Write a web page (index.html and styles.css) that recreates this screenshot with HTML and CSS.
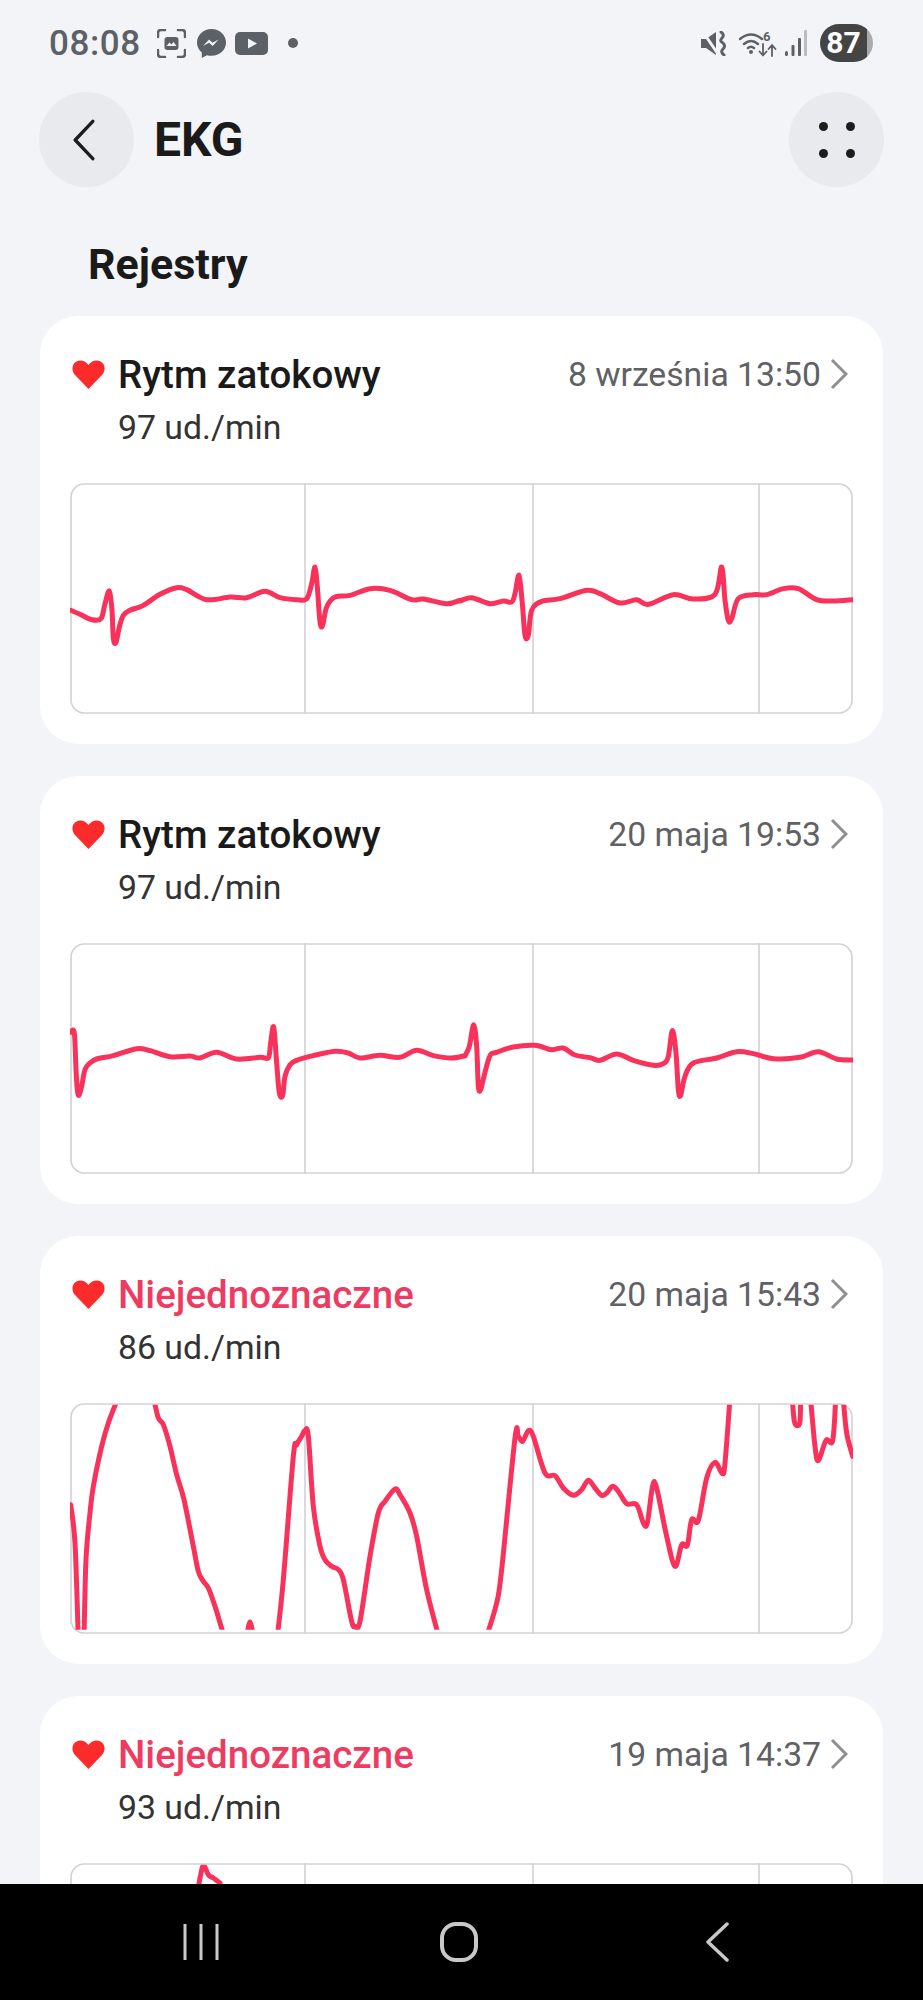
FILE: index.html
```html
<!DOCTYPE html>
<html lang="pl">
<head>
  <meta charset="UTF-8" />
  <meta name="viewport" content="width=device-width, initial-scale=1.0"/>
  <title>EKG</title>
  <link rel="stylesheet" href="styles.css">
</head>
<body>
  <!-- shared shapes -->
  <svg class="defs" width="0" height="0">
    <defs>
      <symbol id="heart" viewBox="0 0 33 29">
        <path d="M16.500 29L3 15C-1 10.500 0 4 4 1.800 8-.5 13 .5 16.500 5 20 .5 25-.5 29 1.800c4 2.200 5 8.700 1 13.200z"/>
      </symbol>
      <symbol id="chev" viewBox="0 0 18 32">
        <path d="M2 2l14 14L2 30"/>
      </symbol>
      <g id="grid">
        <path class="grid" d="M705 0V693M1389 0V693M2067 0V693"/>
        <rect class="grid" x="3" y="3" width="2343" height="687" rx="40"/>
      </g>
      <clipPath id="plot"><rect x="0" y="5" width="2349" height="675"/></clipPath>
    </defs>
  </svg>

  <div class="page">
    <div class="statusbar">
      <div class="status-left">
        <span class="clock">08:08</span>
        <svg class="ic-shot" viewBox="0 0 29 29">
          <path class="ic-line" d="M1 8V4q0-3 3-3h4M21 1h4q3 0 3 3v4M28 21v4q0 3-3 3h-4M8 28H4q-3 0-3-3v-4"/>
          <rect x="7.500" y="8" width="14" height="13" rx="3"/>
          <path class="ic-cut" d="M9.500 17l3-3.500 2 2 2-2.500 3 4z"/>
        </svg>
        <svg class="ic-msg" viewBox="0 0 29 29">
          <path d="M14.500 0C6.500 0 0 6 0 13.500c0 4 1.800 7.500 4.800 10V29l5.100-2.800c1.400.4 3 .6 4.600.6 8 0 14.500-6 14.500-13.300S22.500 0 14.500 0z"/>
          <path class="ic-bolt" d="M6 17l6-6.500 3.500 3.300 6-3.300-5.800 6.500-3.600-3.300z"/>
        </svg>
        <svg class="ic-yt" viewBox="0 0 33 23">
          <rect width="33" height="23" rx="5"/>
          <path class="ic-cut" d="M13 6.500l9 5-9 5z"/>
        </svg>
        <span class="status-dot"></span>
      </div>
      <div class="status-right">
        <svg class="ic-mute" viewBox="0 0 26 25">
          <path d="M0 8h5L15 1v23L5 17H0z"/>
          <path class="ic-cutline" d="M2 1l15 22"/>
          <path class="ic-wave" d="M20 1q4 3 1 6t1 5q3 3 0 6t1 6"/>
        </svg>
        <svg class="ic-wifi" viewBox="0 0 38 27">
          <path class="ic-line" d="M1 9q11-9 22 0M5 14q7-6 14 0M9 18q3-2.500 6 0"/>
          <circle cx="12" cy="22" r="2"/>
          <text class="wifi-six" x="24" y="11">6</text>
          <path class="ic-thin" d="M24 14v11M20.500 21.500l3.500 4 3.500-4M33 26V15M29.500 19l3.500-4 3.500 4"/>
        </svg>
        <svg class="ic-signal" viewBox="0 0 22 26">
          <rect x="0" y="21" width="3" height="5" rx="1.500"/>
          <rect x="6.500" y="15" width="3" height="11" rx="1"/>
          <rect x="13" y="8" width="3" height="18" rx="1"/>
          <rect class="signal-off" x="19" y="0" width="3" height="26" rx="1"/>
        </svg>
        <div class="battery">87</div>
      </div>
    </div>

    <div class="appbar">
      <div class="round-btn">
        <svg class="ic-back" viewBox="0 0 20 38"><path d="M18 2L2 19l16 17"/></svg>
      </div>
      <h1>EKG</h1>
      <div class="round-btn more">
        <div class="dots"><i></i><i></i><i></i><i></i></div>
      </div>
    </div>

    <div class="list">
      <h2>Rejestry</h2>

      <div class="card">
        <div class="card-head">
          <svg class="heart"><use href="#heart"/></svg>
          <span class="card-title">Rytm zatokowy</span>
          <span class="card-date">8 września 13:50</span>
          <svg class="chev"><use href="#chev"/></svg>
        </div>
        <div class="card-sub">97 ud./min</div>
        <svg class="chart" viewBox="0 0 2349 693">
          <use href="#grid"/>
          <polyline class="trace" transform="translate(-120,-518)" points="122,900 150,912 185,928 213,925 225,880 238,842 246,900 250,985 258,996 268,950 280,915 300,900 340,885 390,852 440,832 470,838 530,868 600,860 650,862 705,843 750,862 800,868 830,865 845,820 855,770 862,830 870,935 878,945 890,890 915,860 960,855 1020,835 1080,840 1145,868 1180,866 1250,880 1290,870"/>
          <polyline class="trace" transform="translate(1170,-518)" points="0,872 35,862 90,880 130,872 155,875 165,850 177,795 187,880 195,975 205,975 215,900 245,873 300,865 380,840 420,850 480,878 530,868 565,882 640,853 700,866 765,852 785,770 795,870 805,930 815,925 835,865 880,853 920,853 970,835 1015,835 1070,868 1120,872 1178,868"/>
        </svg>
      </div>

      <div class="card">
        <div class="card-head">
          <svg class="heart"><use href="#heart"/></svg>
          <span class="card-title">Rytm zatokowy</span>
          <span class="card-date">20 maja 19:53</span>
          <svg class="chev"><use href="#chev"/></svg>
        </div>
        <div class="card-sub">97 ud./min</div>
        <svg class="chart" viewBox="0 0 2349 693">
          <use href="#grid"/>
          <polyline class="trace" transform="translate(-120,-40)" points="122,308 133,310 138,420 142,480 147,497 155,470 165,420 180,400 200,388 250,378 320,357 360,363 420,381 480,379 510,385 560,368 620,388 690,383 715,384 722,340 731,292 740,400 748,490 758,497 765,440 780,405 800,392 850,378 915,365 955,370 990,385 1050,377 1110,383 1160,362 1210,378 1265,385 1305,378"/>
          <polyline class="trace" transform="translate(1170,-40)" points="15,378 28,350 41,285 50,350 55,470 62,480 72,440 90,378 110,368 160,352 225,347 275,360 310,355 345,376 390,384 420,392 470,373 520,392 580,407 610,402 625,380 637,303 648,370 655,480 662,497 675,440 700,400 770,385 830,366 880,372 940,387 1020,383 1075,366 1130,388 1178,391"/>
        </svg>
      </div>

      <div class="card">
        <div class="card-head">
          <svg class="heart"><use href="#heart"/></svg>
          <span class="card-title alert">Niejednoznaczne</span>
          <span class="card-date">20 maja 15:43</span>
          <svg class="chev"><use href="#chev"/></svg>
        </div>
        <div class="card-sub">86 ud./min</div>
        <svg class="chart" viewBox="0 0 2349 693">
          <use href="#grid"/>
          <g clip-path="url(#plot)">
            <g transform="translate(-120,-70)">
              <polyline class="trace" points="122,375 135,490 145,780"/>
              <polyline class="trace" points="162,780 168,540 180,400 190,320 215,200 235,130 262,60"/>
              <polyline class="trace" points="372,60 385,115 400,135 420,200 440,285 462,360 490,500 505,575 520,605 535,625 555,680 582,770"/>
              <polyline class="trace" points="650,770 660,727 670,770"/>
              <polyline class="trace" points="742,770 760,600 790,230 800,195 815,170 825,152 835,170 850,380 870,500 885,540 905,560 925,570 940,600 965,725 975,740 990,725 1020,530 1045,400 1065,365 1095,328 1110,345 1140,400 1160,470 1190,630 1226,770"/>
            </g>
            <g transform="translate(1170,-70)">
              <polyline class="trace" points="80,770 110,670 125,570 165,175 175,170 188,185 205,153 220,170 255,280 285,288 310,325 340,347 365,330 385,302 405,325 425,347 440,340 458,320 475,335 500,372 530,375 550,430 562,430 578,318 590,325 620,470 645,560 665,495 682,497 695,420 715,422 740,295 765,248 787,282 795,250 810,55"/>
              <polyline class="trace" points="997,60 1003,125 1012,138 1020,125 1022,60"/>
              <polyline class="trace" points="1052,60 1065,200 1075,243 1098,182 1118,183 1127,60"/>
              <polyline class="trace" points="1150,60 1160,160 1178,230"/>
            </g>
          </g>
        </svg>
      </div>

      <div class="card">
        <div class="card-head">
          <svg class="heart"><use href="#heart"/></svg>
          <span class="card-title alert">Niejednoznaczne</span>
          <span class="card-date">19 maja 14:37</span>
          <svg class="chev"><use href="#chev"/></svg>
        </div>
        <div class="card-sub">93 ud./min</div>
        <svg class="chart" viewBox="0 0 2349 693">
          <use href="#grid"/>
          <g clip-path="url(#plot)">
            <polyline class="trace" points="375,130 393,30 402,8 415,35 430,45 450,60"/>
          </g>
        </svg>
      </div>
    </div>

    <div class="navbar">
      <svg class="nav-recent" viewBox="0 0 36 36"><path d="M2 0V36M18 0V36M34 0V36"/></svg>
      <svg class="nav-home" viewBox="0 0 38 40"><rect x="2" y="2" width="34" height="36" rx="14"/></svg>
      <svg class="nav-back" viewBox="0 0 24 40"><path d="M22 2L3 20l19 18"/></svg>
    </div>
  </div>
  <script src="charts.js"></script>
</body>
</html>
```

FILE: styles.css
```css
body {
  margin: 0;
  background-color: #f2f4f7;
  font-family: Roboto, "Liberation Sans", sans-serif;
  color: #1a1a1a;
}
h1, h2 {
  margin: 0;
}
svg {
  display: block;
  flex: none;
}
.defs {
  position: absolute;
}
.page {
  height: 2000px;
  display: flex;
  flex-direction: column;
  overflow: hidden;
}

/* status bar */
.statusbar {
  height: 92px;
  flex: none;
  box-sizing: border-box;
  padding: 0 50px 6px 49px;
  display: flex;
  align-items: center;
  justify-content: space-between;
  color: #5c6167;
  fill: #5c6167;
}
.status-left,
.status-right {
  display: flex;
  align-items: center;
}
.clock {
  font-size: 35px;
  font-weight: 500;
  letter-spacing: 0.6px;
  width: 108px;
}
.ic-shot { width: 29px; height: 29px; margin-right: 11px; }
.ic-msg { width: 29px; height: 29px; margin-right: 9px; }
.ic-yt { width: 33px; height: 23px; margin-right: 20px; }
.status-dot {
  width: 10px;
  height: 10px;
  border-radius: 50%;
  background-color: #5c6167;
}
.ic-line, .ic-thin, .ic-cutline, .ic-wave {
  fill: none;
  stroke: #5c6167;
  stroke-width: 2.500;
  stroke-linecap: round;
}
.ic-thin { stroke-width: 1.800; }
.ic-wave { stroke-width: 3; }
.ic-cutline { stroke: #f2f4f7; stroke-width: 3; }
.ic-cut { fill: #f2f4f7; }
.ic-bolt { fill: #f2f4f7; }
.ic-mute { width: 26px; height: 25px; margin-right: 12px; }
.ic-wifi { width: 38px; height: 27px; margin-right: 8px; }
.wifi-six {
  font-size: 13px;
  font-weight: 700;
  font-family: Roboto, sans-serif;
}
.ic-signal { width: 22px; height: 26px; margin-right: 13px; }
.signal-off { fill: #b9bcc0; }
.battery {
  width: 53px;
  height: 38px;
  border-radius: 19px;
  background: linear-gradient(to right, #444 0, #444 47px, #aaa 47px);
  color: #fff;
  font-size: 30px;
  font-weight: 700;
  line-height: 38px;
  padding-right: 6px;
  box-sizing: border-box;
  text-align: center;
}

/* app bar */
.appbar {
  height: 95px;
  flex: none;
  padding: 0 39px;
  display: flex;
  align-items: center;
}
.round-btn {
  width: 95px;
  height: 95px;
  border-radius: 50%;
  background-color: #e8eaed;
  display: flex;
  align-items: center;
  justify-content: center;
}
.round-btn.more {
  margin-left: auto;
}
.ic-back {
  width: 22px;
  height: 42px;
  margin-right: 5px;
  fill: none;
  stroke: #1c1c1c;
  stroke-width: 3;
  stroke-linecap: round;
  stroke-linejoin: round;
}
h1 {
  font-size: 48px;
  font-weight: 700;
  margin-left: 20px;
}
.dots {
  display: grid;
  grid-template-columns: 9px 9px;
  gap: 18px;
}
.dots i {
  width: 9px;
  height: 9px;
  border-radius: 50%;
  background-color: #1c1c1c;
}

/* records list */
.list {
  flex: 1;
  min-height: 0;
  overflow: hidden;
  padding: 0 40px;
}
h2 {
  height: 129px;
  box-sizing: border-box;
  padding: 51px 0 0 48px;
  font-size: 43px;
  font-weight: 700;
  line-height: 52px;
}
.card {
  height: 428px;
  box-sizing: border-box;
  margin-bottom: 32px;
  padding: 36px 30px 0;
  background-color: #fff;
  border-radius: 38px;
}
.card-head {
  height: 44px;
  display: flex;
  align-items: center;
}
.heart {
  width: 33px;
  height: 29px;
  margin: 0 13px 0 2px;
  fill: #fb2b2b;
}
.card-title {
  font-size: 38.500px;
  font-weight: 500;
  color: #1a1a1a;
}
.card-title.alert {
  color: #ee3b62;
}
.card-date {
  margin-left: auto;
  font-size: 33.700px;
  color: #5f6164;
}
.chev {
  width: 18px;
  height: 32px;
  margin-left: 9px;
  margin-right: 5px;
  fill: none;
  stroke: #8f8f8f;
  stroke-width: 3;
}
.card-sub {
  margin: 10px 0 0 48px;
  height: 44px;
  font-size: 33.800px;
  line-height: 44px;
  color: #333;
}
.chart {
  width: 783px;
  height: 231px;
  margin-top: 33px;
}
.grid {
  fill: none;
  stroke: #d3d3d3;
  stroke-width: 5;
}
.trace {
  fill: none;
  stroke: #f8325b;
  stroke-width: 15;
  stroke-linejoin: round;
  stroke-linecap: round;
}

/* navigation bar */
.navbar {
  height: 116px;
  flex: none;
  background-color: #000;
  display: flex;
  align-items: center;
  fill: none;
  stroke: #c8c8c8;
}
.nav-recent { width: 36px; height: 36px; margin-left: 183px; stroke-width: 3; }
.nav-home { width: 38px; height: 40px; margin-left: 221px; stroke-width: 4; }
.nav-back { width: 24px; height: 40px; margin-left: 227px; stroke-width: 3.500; stroke-linecap: round; stroke-linejoin: round; }
```

FILE: charts.js
```js
// turn the sampled polylines into smooth curves (catmull-rom)
document.querySelectorAll("polyline.trace").forEach((line) => {
  const pts = line.getAttribute("points").trim().split(" ").map((p) => p.split(",").map(Number));
  let d = "M" + pts[0].join(" ");
  for (let i = 0; i < pts.length - 1; i++) {
    const p0 = pts[i - 1] || pts[i];
    const p1 = pts[i];
    const p2 = pts[i + 1];
    const p3 = pts[i + 2] || p2;
    const c1 = [p1[0] + (p2[0] - p0[0]) / 6, p1[1] + (p2[1] - p0[1]) / 6];
    const c2 = [p2[0] - (p3[0] - p1[0]) / 6, p2[1] - (p3[1] - p1[1]) / 6];
    d += " C" + c1.join(" ") + " " + c2.join(" ") + " " + p2.join(" ");
  }
  const path = document.createElementNS("http://www.w3.org/2000/svg", "path");
  path.setAttribute("class", "trace");
  path.setAttribute("d", d);
  if (line.hasAttribute("transform")) path.setAttribute("transform", line.getAttribute("transform"));
  line.replaceWith(path);
});
```
